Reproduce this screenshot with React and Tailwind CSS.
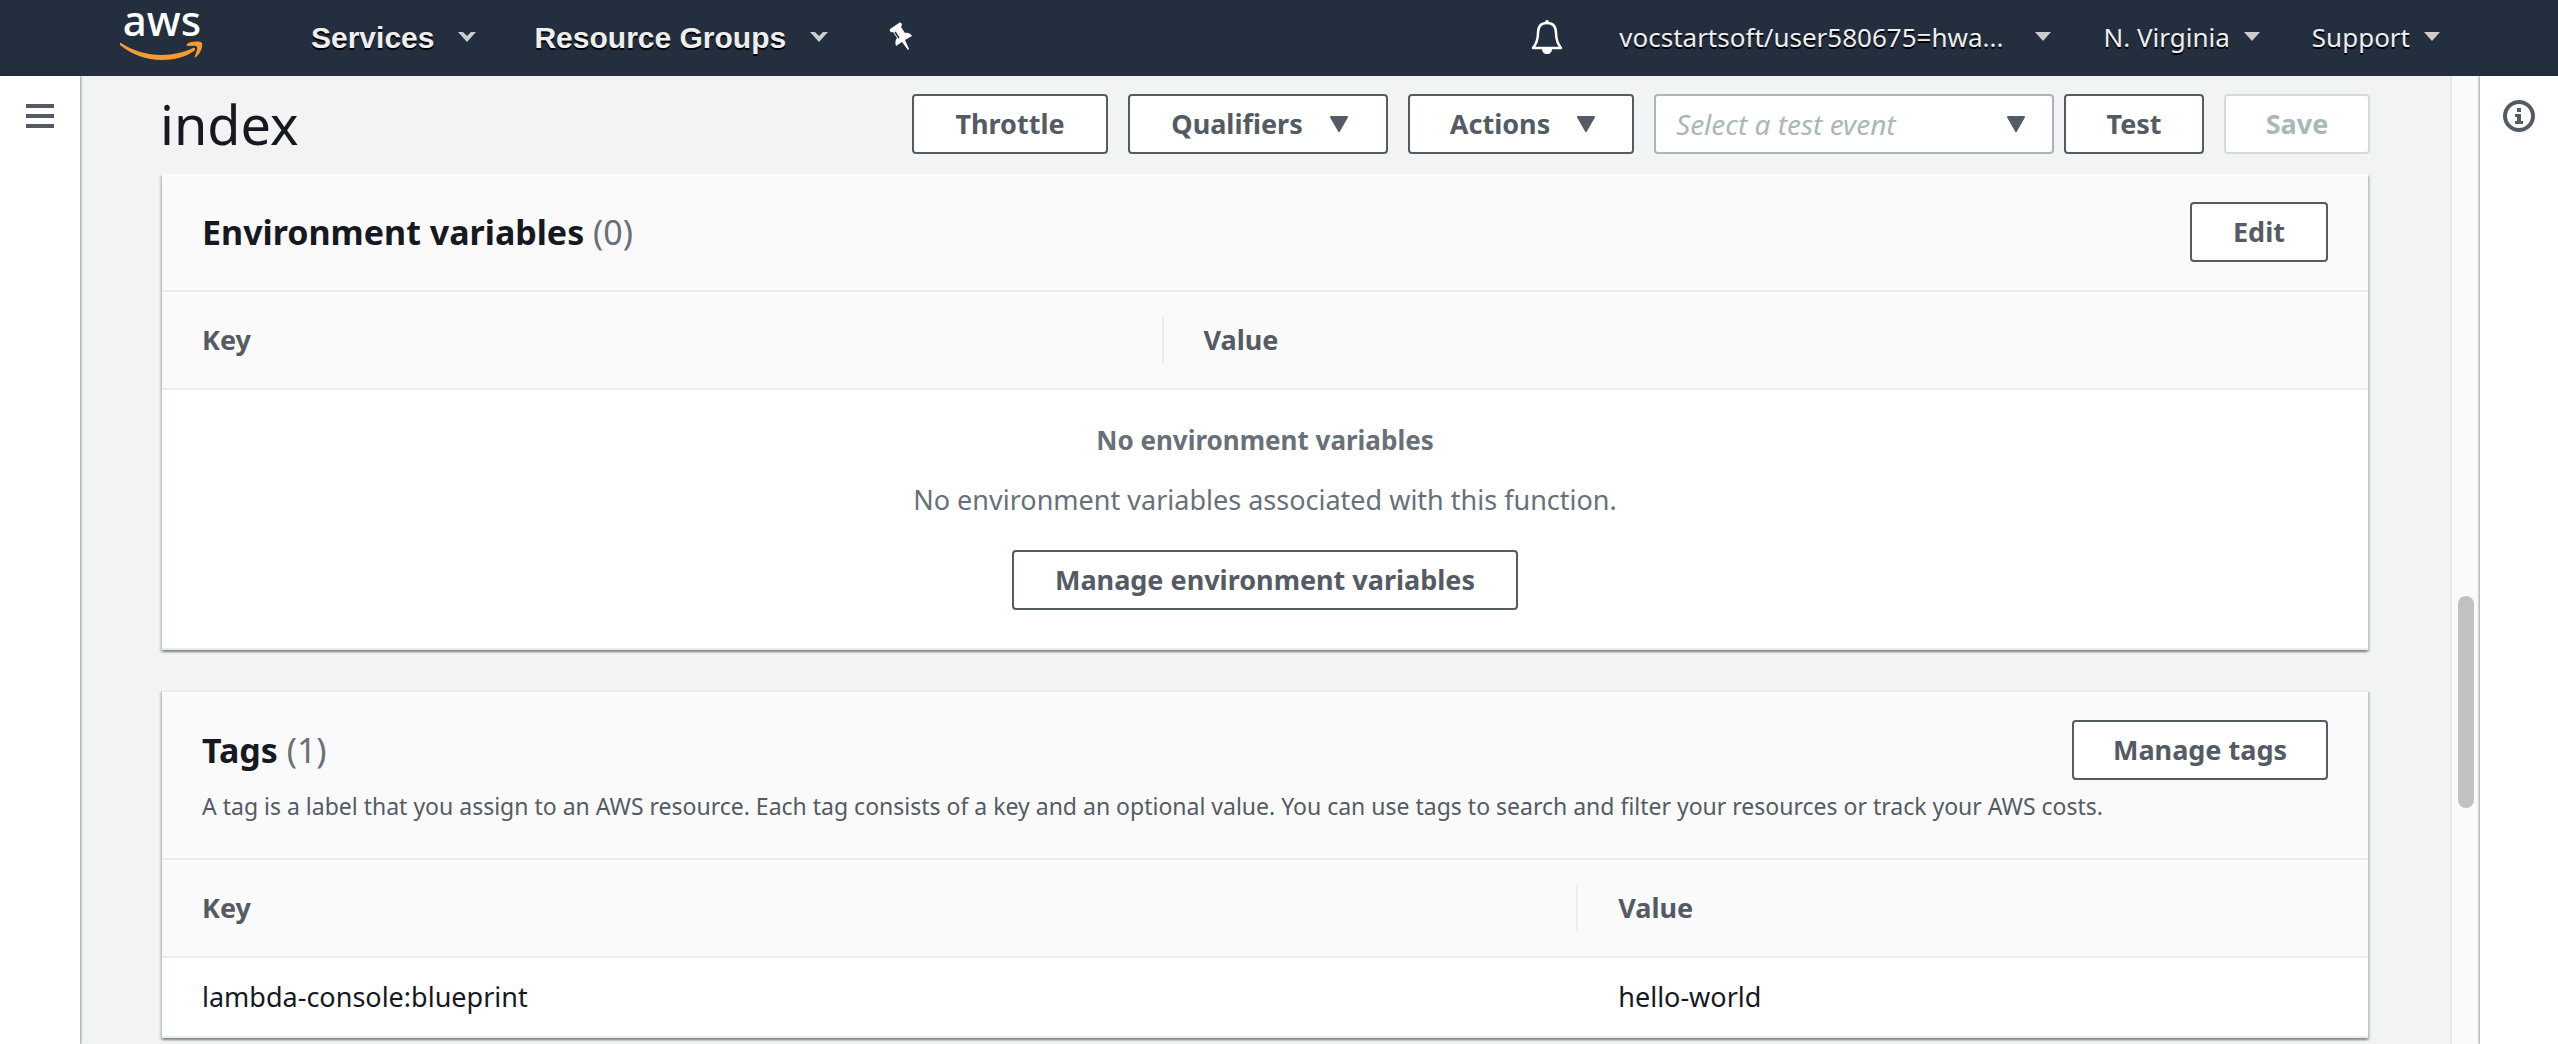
import clsx from 'clsx';

const TAGS = [{ key: 'lambda-console:blueprint', value: 'hello-world' }];

function AwsLogo() {
  return (
    <svg width="84" height="74" viewBox="0 0 84 74" aria-label="AWS">
      <text
        x="42"
        y="36"
        textAnchor="middle"
        fontFamily="'Noto Sans', sans-serif"
        fontSize="42"
        fontWeight="500"
        fill="#fff"
      >
        aws
      </text>
      <path
        d="M1 43 C13 51 27 55 42 55 C53 55 65 52 73 48 C75 47 76 49 74 51 C66 57 54 60 42 60 C26 60 11 54 0 45 C-1 44 0 42 1 43 Z"
        fill="#f79a31"
      />
      <path
        d="M67 44 C71 41 80 41 82 43 C83 46 81 53 76 57 C75 58 74 57 75 56 C76 53 78 48 77 47 C76 45 71 46 68 46 C67 46 66 45 67 44 Z"
        fill="#f79a31"
      />
    </svg>
  );
}

function Chevron() {
  return (
    <svg width="18" height="12" viewBox="0 0 18 12" aria-hidden="true">
      <path d="M0 1 H5 L9 5 L13 1 H18 L9 11 Z" fill="#ccc" />
    </svg>
  );
}

function SmallCaret() {
  return (
    <svg width="16" height="10" viewBox="0 0 16 10" aria-hidden="true">
      <path d="M0 0 H16 L8 9 Z" fill="#ccc" />
    </svg>
  );
}

function Triangle() {
  return (
    <svg width="20" height="16" viewBox="0 0 20 16" aria-hidden="true">
      <path
        d="M2 1 H18 L10 15 Z"
        fill="#545b64"
        stroke="#545b64"
        strokeWidth="2"
        strokeLinejoin="round"
      />
    </svg>
  );
}

function PinIcon() {
  return (
    <svg width="26" height="30" viewBox="0 0 26 30" aria-hidden="true">
      <path
        d="M2 7 L11 1 C12 0 14 1 14 3 L13 5 L17 11 C20 10 23 12 24 14 L17 18 L21 27 L20 28 L14 20 L8 24 C7 21 7 19 9 16 L5 10 C3 11 1 9 2 7 Z"
        fill="#fff"
      />
      <path d="M7 10 L11 16" stroke="#232f3e" strokeWidth="1.5" />
    </svg>
  );
}

function BellIcon() {
  return (
    <svg width="32" height="36" viewBox="0 0 32 36" aria-hidden="true">
      <path
        d="M2 29 C6 24 7 20 7 14 C7 8 10 4 16 4 C22 4 25 8 25 14 C25 20 26 24 30 29 Z"
        fill="none"
        stroke="#fff"
        strokeWidth="2.5"
        strokeLinejoin="round"
      />
      <circle cx="16" cy="3" r="2" fill="#fff" />
      <path d="M11 30 H21 C21 33 19 35 16 35 C13 35 11 33 11 30 Z" fill="#fff" />
    </svg>
  );
}

function InfoIcon() {
  return (
    <svg width="32" height="32" viewBox="0 0 32 32" aria-hidden="true">
      <circle cx="16" cy="16" r="14" fill="none" stroke="#545b64" strokeWidth="4" />
      <path d="M14 8 H18 V12 H14 Z M12 14 H18 V21 H20 V24 H12 V21 H14 V17 H12 Z" fill="#545b64" />
    </svg>
  );
}

function MenuIcon() {
  return (
    <svg width="28" height="24" viewBox="0 0 28 24" aria-hidden="true">
      <path d="M0 0 H28 V4 H0 Z M0 10 H28 V14 H0 Z M0 20 H28 V24 H0 Z" fill="#545b64" />
    </svg>
  );
}

function Button({ children, className, disabled }) {
  return (
    <button
      disabled={disabled}
      className={clsx(
        'flex h-[60px] shrink-0 items-center justify-center rounded-[4px] border-2 bg-white text-[27px] leading-9 font-bold',
        disabled ? 'border-[#d5dbdb] text-[#aab7b8]' : 'border-[#545b64] text-[#545b64]',
        className
      )}
    >
      {children}
    </button>
  );
}

function NavItem({ children, className }) {
  return (
    <button
      className={clsx('flex items-center text-[#eee] [text-shadow:0_2px_0_#000]', className)}
    >
      {children}
    </button>
  );
}

function TopNav() {
  return (
    <header className="flex h-[76px] shrink-0 items-center justify-between bg-[#232f3e] pr-[118px] pb-[2px] pl-[120px]">
      <nav className="flex items-center">
        <a href="#home" className="mr-[107px]">
          <AwsLogo />
        </a>
        <NavItem className="mr-[58px] gap-6 font-['Liberation_Sans',sans-serif] text-[30px] font-bold">
          Services <Chevron />
        </NavItem>
        <NavItem className="mr-[60px] gap-6 font-['Liberation_Sans',sans-serif] text-[30px] font-bold">
          Resource Groups <Chevron />
        </NavItem>
        <button aria-label="Pin shortcuts">
          <PinIcon />
        </button>
      </nav>
      <div className="flex items-center text-[26px]">
        <button aria-label="Notifications" className="mr-14">
          <BellIcon />
        </button>
        <NavItem className="mr-[52px] gap-8">
          vocstartsoft/user580675=hwa... <SmallCaret />
        </NavItem>
        <NavItem className="mr-[52px] gap-[14px]">
          N. Virginia <SmallCaret />
        </NavItem>
        <NavItem className="gap-[14px]">
          Support <SmallCaret />
        </NavItem>
      </div>
    </header>
  );
}

function TitleBar() {
  return (
    <div className="flex h-[98px] items-start justify-between px-20 pt-[18px]">
      <h1 className="text-[54px] leading-[60px] text-[#16191f]">index</h1>
      <div className="flex items-center gap-5">
        <Button className="w-[196px]">Throttle</Button>
        <Button className="w-[260px] gap-[26px] pl-1">
          Qualifiers <Triangle />
        </Button>
        <Button className="w-[226px] gap-[26px] pl-1">
          Actions <Triangle />
        </Button>
        <div className="flex gap-[10px]">
          <div className="relative w-[400px]">
            <select
              aria-label="Test event"
              className="h-[60px] w-full appearance-none rounded-[4px] border-2 border-[#aab7b8] bg-white pr-16 pl-5 text-[28px] text-[#aab7b8] italic"
            >
              <option>Select a test event</option>
            </select>
            <span className="pointer-events-none absolute inset-y-0 right-7 flex items-center">
              <Triangle />
            </span>
          </div>
          <Button className="w-[140px]">Test</Button>
        </div>
        <Button className="w-[146px]" disabled>
          Save
        </Button>
      </div>
    </div>
  );
}

function Panel({ title, count, action, description, className, children }) {
  return (
    <section
      className={clsx(
        'bg-white shadow-[0_2px_2px_0_rgba(0,28,36,0.3),2px_2px_2px_0_rgba(0,28,36,0.15),-2px_2px_2px_0_rgba(0,28,36,0.15)]',
        className
      )}
    >
      <div
        className={clsx(
          'border-b-2 border-[#eaeded] bg-[#fafafa] px-10 pt-7',
          description ? 'pb-9' : 'pb-7'
        )}
      >
        <div className="flex items-center justify-between">
          <h2 className="text-[34px] leading-[60px] font-bold text-[#16191f]">
            {title} <span className="font-normal text-[#687078]">({count})</span>
          </h2>
          {action}
        </div>
        {description && (
          <p className="mt-[10px] text-[23px] leading-8 text-[#545b64]">{description}</p>
        )}
      </div>
      {children}
    </section>
  );
}

function TableHead({ keyWidth }) {
  return (
    <thead className="bg-[#fafafa] text-left text-[27px] text-[#545b64]">
      <tr className="border-b-2 border-[#eaeded]">
        <th className={clsx('py-6 pl-10', keyWidth)}>
          <div className="border-r-2 border-[#eaeded] leading-[48px]">Key</div>
        </th>
        <th className="py-6 pl-10 leading-[48px]">Value</th>
      </tr>
    </thead>
  );
}

export default function App() {
  return (
    <div className="flex min-h-screen flex-col bg-white font-['Noto_Sans',sans-serif]">
      <TopNav />
      <div className="flex flex-1">
        <aside className="z-10 flex w-20 shrink-0 items-start justify-center bg-white pt-7 shadow-[1px_0_2px_0_rgba(0,28,36,0.4)]">
          <button aria-label="Open navigation">
            <MenuIcon />
          </button>
        </aside>
        <main className="min-w-0 flex-1 bg-[#f2f3f3]">
          <TitleBar />
          <div className="flex flex-col gap-10 px-[82px]">
            <Panel
              title="Environment variables"
              count={0}
              action={<Button className="w-[138px]">Edit</Button>}
              className="border-b-2 border-[#eaeded]"
            >
              <table className="w-full table-fixed border-collapse">
                <TableHead keyWidth="w-[45.4%]" />
                <tbody>
                  <tr>
                    <td colSpan={2} className="pt-8 pb-[38px] text-center text-[#687078]">
                      <p className="text-[26px] leading-9 font-bold">No environment variables</p>
                      <p className="mt-6 text-[27px] leading-9">
                        No environment variables associated with this function.
                      </p>
                      <Button className="mx-auto mt-8 w-[506px]">Manage environment variables</Button>
                    </td>
                  </tr>
                </tbody>
              </table>
            </Panel>
            <Panel
              title="Tags"
              count={TAGS.length}
              action={<Button className="w-[256px]">Manage tags</Button>}
              description="A tag is a label that you assign to an AWS resource. Each tag consists of a key and an optional value. You can use tags to search and filter your resources or track your AWS costs."
              className="border-y-2 border-[#eaeded]"
            >
              <table className="w-full table-fixed border-collapse">
                <TableHead keyWidth="w-[64.2%]" />
                <tbody className="text-[27px] leading-[38px] text-[#16191f]">
                  {TAGS.map(tag => (
                    <tr key={tag.key}>
                      <td className="py-5 pl-10">{tag.key}</td>
                      <td className="py-5 pl-10">{tag.value}</td>
                    </tr>
                  ))}
                </tbody>
              </table>
            </Panel>
          </div>
        </main>
        {/* scrollbar gutter */}
        <div className="w-[30px] shrink-0 border-l-2 border-[#e8e8e8] bg-[#fafafa] pl-[6px]">
          <div className="mt-[520px] h-[212px] w-4 rounded-full bg-[#c1c1c1]" />
        </div>
        <aside className="flex w-[78px] shrink-0 items-start justify-center bg-white pt-6 shadow-[-1px_0_2px_0_rgba(0,28,36,0.4)]">
          <button aria-label="Open help">
            <InfoIcon />
          </button>
        </aside>
      </div>
    </div>
  );
}
